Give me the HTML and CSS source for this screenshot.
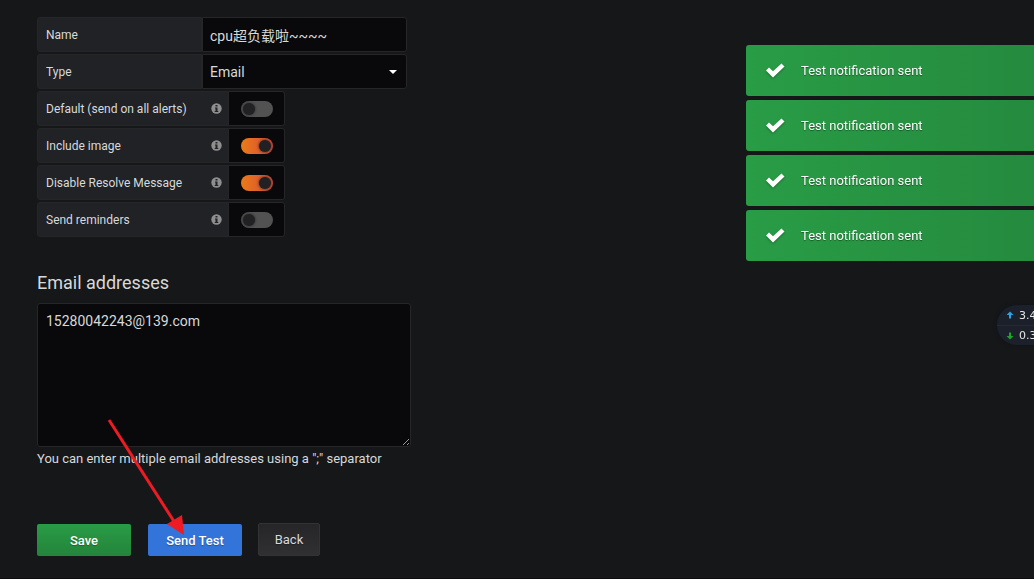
FILE: index.html
```html
<!DOCTYPE html>
<html lang="en">

<head>
    <meta charset="UTF-8">
    <meta name="viewport" content="width=device-width, initial-scale=1.0">
    <title>Edit Notification Channel</title>
    <link rel="stylesheet" href="styles.css">
</head>

<body>
    <!-- shared icons -->
    <svg class="icon-defs" aria-hidden="true">
        <symbol id="icon-info" viewBox="0 0 11 11">
            <circle cx="5.500" cy="5.500" r="5.200" fill="#8e8e8e" />
            <path d="M4.500 2h2v1.500h-2zM4 4.500h2.500v3.500h.8v1H3.700v-1h.8V5.500H4z" fill="#202226" />
        </symbol>
        <symbol id="icon-check" viewBox="0 0 20 15">
            <path d="M1 7.500L4 4.500L8 8.300L16.500 0.500L19.500 3.500L8 14.500Z" fill="#fff" />
        </symbol>
    </svg>

    <form class="channel-form">
        <div class="form-rows">
            <div class="form-row">
                <label class="form-label" for="name">Name</label>
                <input class="form-input" type="text" id="name" value="cpu超负载啦~~~~">
            </div>
            <div class="form-row">
                <label class="form-label" for="type">Type</label>
                <div class="select-wrapper">
                    <select class="form-input" id="type">
                        <option>Email</option>
                    </select>
                </div>
            </div>
            <div class="form-row">
                <label class="form-label form-label-wide" for="default">Default (send on all alerts)
                    <svg class="info-icon"><use href="#icon-info" /></svg>
                </label>
                <div class="switch-box">
                    <input class="switch" type="checkbox" id="default">
                </div>
            </div>
            <div class="form-row">
                <label class="form-label form-label-wide" for="image">Include image
                    <svg class="info-icon"><use href="#icon-info" /></svg>
                </label>
                <div class="switch-box">
                    <input class="switch" type="checkbox" id="image" checked>
                </div>
            </div>
            <div class="form-row">
                <label class="form-label form-label-wide" for="resolve">Disable Resolve Message
                    <svg class="info-icon"><use href="#icon-info" /></svg>
                </label>
                <div class="switch-box">
                    <input class="switch" type="checkbox" id="resolve" checked>
                </div>
            </div>
            <div class="form-row">
                <label class="form-label form-label-wide" for="reminders">Send reminders
                    <svg class="info-icon"><use href="#icon-info" /></svg>
                </label>
                <div class="switch-box">
                    <input class="switch" type="checkbox" id="reminders">
                </div>
            </div>
        </div>

        <h3 class="section-title"><label for="addresses">Email addresses</label></h3>
        <textarea class="form-input addresses" id="addresses">15280042243@139.com</textarea>
        <p class="hint">You can enter multiple email addresses using a ";" separator</p>

        <div class="button-row">
            <button class="btn btn-save" type="submit">Save</button>
            <button class="btn btn-test" type="button">Send Test</button>
            <button class="btn btn-back" type="button">Back</button>
        </div>

        <svg class="arrow" viewBox="0 0 80 118" aria-hidden="true">
            <path d="M3 2L69 105" stroke="#ed1c24" stroke-width="3" />
            <path d="M61 106L76 97L78 117Z" fill="#ed1c24" />
        </svg>
    </form>

    <div class="alerts">
        <div class="alert"><svg class="check-icon"><use href="#icon-check" /></svg>Test notification sent</div>
        <div class="alert"><svg class="check-icon"><use href="#icon-check" /></svg>Test notification sent</div>
        <div class="alert"><svg class="check-icon"><use href="#icon-check" /></svg>Test notification sent</div>
        <div class="alert"><svg class="check-icon"><use href="#icon-check" /></svg>Test notification sent</div>
    </div>

    <!-- network speed widget -->
    <div class="net-speed">
        <div class="net-row">
            <svg class="net-arrow" viewBox="0 0 8 8"><path d="M4 0.500L7.500 4H5v3.500H3V4H0.500Z" fill="#2ba3e0" /></svg>3.4
        </div>
        <div class="net-row">
            <svg class="net-arrow" viewBox="0 0 8 8"><path d="M4 7.500L0.500 4H3V0.500h2V4h2.500Z" fill="#1fa32b" /></svg>0.3
        </div>
    </div>
</body>

</html>
```
FILE: styles.css
```css
* {
    box-sizing: border-box;
}

body {
    margin: 0;
    min-height: 100vh;
    padding: 17px 37px 0;
    overflow: hidden;
    background-color: #161719;
    color: #d8d9da;
    font-family: Roboto, "Noto Sans CJK SC", sans-serif;
    font-size: 13px;
    border-bottom: 1px solid #0d0c0e;
}

.icon-defs {
    display: none;
}

.channel-form {
    position: relative;
    max-width: 374px;
}

.form-rows {
    display: flex;
    flex-direction: column;
    gap: 2px;
}

.form-row {
    display: flex;
    height: 35px;
}

.form-label {
    display: flex;
    align-items: center;
    justify-content: space-between;
    width: 165px;
    padding: 0 6px 0 8px;
    background-color: #202226;
    border: 1px solid #262628;
    border-radius: 3px 0 0 3px;
    font-size: 12px;
}

.form-label-wide {
    width: 192px;
}

.info-icon {
    width: 11px;
    height: 11px;
}

.form-input {
    width: 205px;
    margin: 0;
    padding: 0 7px;
    background-color: #09090b;
    color: #d8d9da;
    border: 1px solid #262628;
    border-radius: 0 3px 3px 0;
    font-family: inherit;
    font-size: 14px;
    outline: none;
}

.select-wrapper {
    position: relative;
    display: flex;
}

.select-wrapper select {
    appearance: none;
}

.select-wrapper::after {
    content: "";
    position: absolute;
    top: 16px;
    right: 10px;
    border: 4px solid transparent;
    border-top-color: #fff;
    border-bottom: 0;
    pointer-events: none;
}

.switch-box {
    display: flex;
    align-items: center;
    justify-content: center;
    width: 56px;
    background-color: #09090b;
    border: 1px solid #262628;
    border-left: 0;
    border-radius: 0 3px 3px 0;
}

.switch {
    appearance: none;
    width: 32px;
    height: 16px;
    margin: 0;
    padding: 2px;
    border-radius: 8px;
    background: #525252;
    cursor: pointer;
}

.switch::before {
    content: "";
    display: block;
    width: 12px;
    height: 12px;
    border-radius: 50%;
    background-color: #212124;
    box-shadow: 0 0 3px #212124;
}

.switch:checked {
    background: linear-gradient(90deg, #eb7b18, #d44a3a);
}

.switch:checked::before {
    margin-left: auto;
}

.section-title {
    margin: 33px 0 8px;
    font-size: 18px;
    font-weight: 400;
    line-height: 25px;
}

.addresses {
    display: block;
    width: 100%;
    height: 144px;
    padding: 7px 8px;
    border-radius: 3px;
    line-height: 20px;
}

.hint {
    margin: 2px 0 0;
    line-height: 20px;
}

.button-row {
    display: flex;
    align-items: flex-end;
    margin-top: 54px;
}

.btn {
    width: 94px;
    height: 32px;
    padding: 0;
    border: 0;
    border-radius: 2px;
    color: #fff;
    font-family: inherit;
    font-size: 13px;
    font-weight: 500;
    text-shadow: 0 1px 1px rgba(0, 0, 0, 0.3);
    cursor: pointer;
}

.btn-save {
    margin-right: 17px;
    background: linear-gradient(#299c46, #23843b);
}

.btn-test {
    margin-right: 16px;
    background-color: #3274d9;
}

.btn-back {
    width: 62px;
    height: 33px;
    background: linear-gradient(#262628, #303032);
    border: 1px solid #333335;
    color: #d8d9da;
    font-weight: 400;
}

/* red pointer laid over the textarea and the button */
.arrow {
    position: absolute;
    left: 69px;
    top: 401px;
    width: 80px;
    height: 118px;
    pointer-events: none;
}

.alerts {
    position: fixed;
    top: 45px;
    right: -112px;
    width: 400px;
    display: flex;
    flex-direction: column;
    gap: 4px;
}

.alert {
    display: flex;
    align-items: center;
    gap: 16px;
    height: 51px;
    padding-left: 19px;
    border-radius: 3px;
    background: linear-gradient(90deg, #299c46, #23843b);
    color: #fff;
    text-shadow: 0 1px 1px rgba(0, 0, 0, 0.4);
}

.check-icon {
    width: 20px;
    height: 15px;
    filter: drop-shadow(0 1px 1px rgba(0, 0, 0, 0.3));
}

.net-speed {
    position: fixed;
    top: 305px;
    right: -63px;
    width: 100px;
    border-radius: 20px;
    background-color: #1c202a;
    box-shadow: 0 0 4px #10131c;
    color: #e6e6e6;
    font-family: "DejaVu Sans", sans-serif;
    font-size: 11px;
}

.net-row {
    display: flex;
    align-items: center;
    gap: 5px;
    height: 20px;
    padding-left: 9px;
}

.net-row + .net-row {
    border-top: 1px solid #252934;
}

.net-arrow {
    width: 8px;
    height: 8px;
}
```
